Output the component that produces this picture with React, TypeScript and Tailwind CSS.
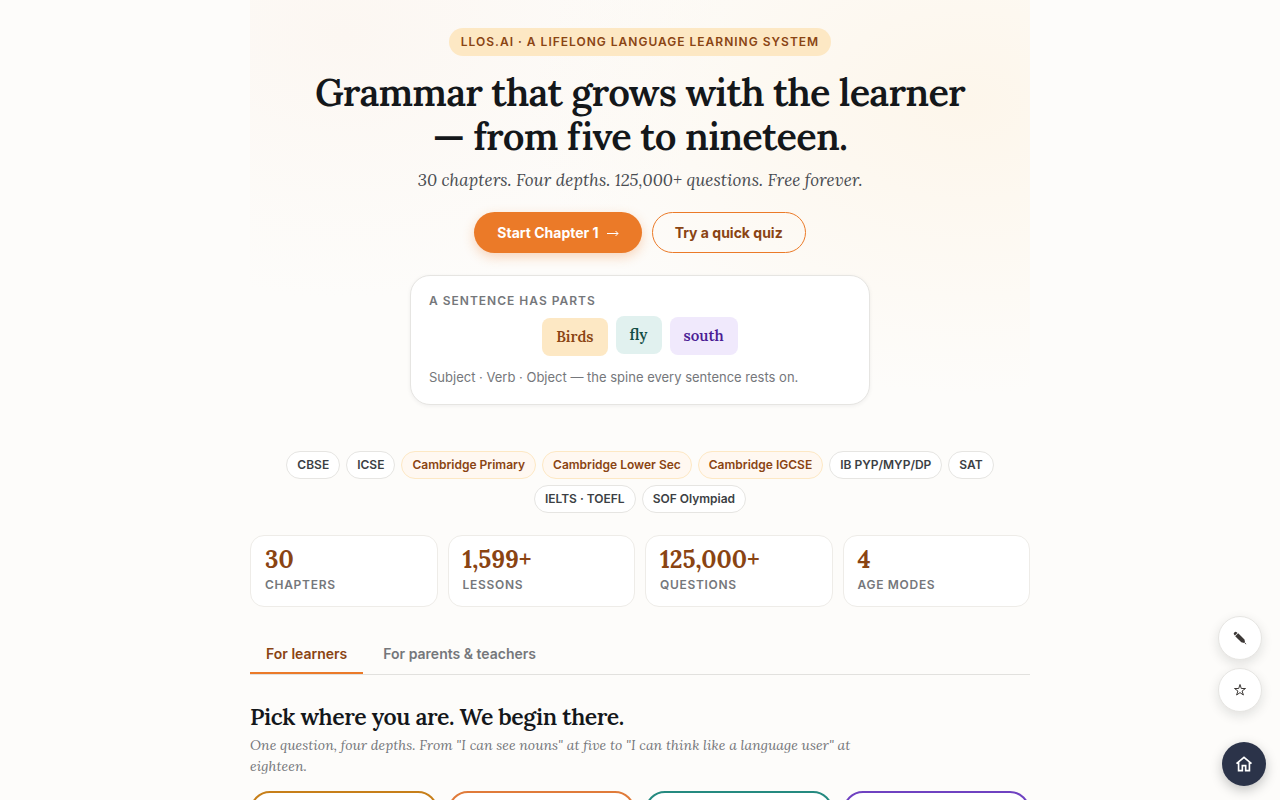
const boards = [
  { name: "CBSE" },
  { name: "ICSE" },
  { name: "Cambridge Primary", highlight: true },
  { name: "Cambridge Lower Sec", highlight: true },
  { name: "Cambridge IGCSE", highlight: true },
  { name: "IB PYP/MYP/DP" },
  { name: "SAT" },
  { name: "IELTS · TOEFL" },
  { name: "SOF Olympiad" },
];

const stats = [
  { value: "30", label: "Chapters" },
  { value: "1,599+", label: "Lessons" },
  { value: "125,000+", label: "Questions" },
  { value: "4", label: "Age modes" },
];

const depths = ["border-[#c77f1a]", "border-[#e07b3a]", "border-[#258a80]", "border-[#6f42c1]"];

function Hero() {
  return (
    <section className="flex flex-col items-center px-6 pt-7 pb-8 text-center bg-[radial-gradient(ellipse_56%_66%_at_92%_24%,#fdf6eb_0%,transparent_100%),radial-gradient(ellipse_50%_60%_at_12%_8%,#fcf7f2_0%,transparent_100%)]">
      <span className="rounded-full bg-[#fde8c4] px-3 py-1 text-xs leading-5 font-semibold tracking-[1px] uppercase text-[#8a4413]">
        LLOS.ai · A lifelong language learning system
      </span>
      <h1 className="mt-3.5 max-w-[680px] font-[Lora,'Liberation_Serif',serif] text-[38px] leading-[44px] font-semibold tracking-[-0.02em] text-[#14171a]">
        Grammar that grows with the learner — from five to nineteen.
      </h1>
      <p className="mt-[9px] font-[Lora,'Liberation_Serif',serif] text-[17px] leading-[26px] italic text-[#4a4d52]">
        30 chapters. Four depths. 125,000+ questions. Free forever.
      </p>
      <div className="mt-[19px] flex flex-wrap justify-center gap-[10px]">
        <button className="flex h-[41px] items-center gap-1.5 rounded-full bg-[#eb7a28] px-[23px] text-sm font-bold text-white shadow-[0_4px_12px_rgba(235,122,40,0.3)]">
          Start Chapter 1
          <svg viewBox="0 0 14 14" className="size-3.5" fill="none" stroke="currentColor" strokeWidth="1">
            <path d="M2 7.500h11M10.500 5l2.500 2.500-2.500 2.500" />
          </svg>
        </button>
        <button className="h-[41px] rounded-full border border-[#eb7a28] px-[22px] text-sm font-bold text-[#8a4413]">
          Try a quick quiz
        </button>
      </div>
      <div className="mt-[22px] w-full max-w-[460px] rounded-[20px] border border-[#e6e5e2] bg-white px-[18px] pt-4 pb-[17px] text-left shadow-[0_1px_4px_rgba(20,23,26,0.06)]">
        <div className="text-xs leading-[18px] font-semibold tracking-[1px] uppercase text-[#75777b]">A sentence has parts</div>
        <div className="mt-1.5 flex justify-center gap-2 font-[Lora,'Liberation_Serif',serif] text-[15px] leading-[22px] font-semibold">
          <span className="mt-0.5 rounded-lg bg-[#fde8c4] px-3.5 py-2 text-[#8a4413]">Birds</span>
          <span className="mb-0.5 rounded-lg bg-[#e1f1ef] px-3.5 py-2 text-[#134e45]">fly</span>
          <span className="mt-px mb-px rounded-lg bg-[#f0e9fc] px-3.5 py-2 text-[#4c1d95]">south</span>
        </div>
        <p className="mt-[11px] text-[13px] leading-5 text-[#75777b]">Subject · Verb · Object — the spine every sentence rests on.</p>
      </div>
    </section>
  );
}

export default function App() {
  return (
    <div className="min-h-screen bg-[#fdfcfa] font-[Inter,sans-serif] text-[#14171a]">
      <main className="mx-auto max-w-[780px] pb-16">
        <Hero />

        <ul className="mt-3.5 flex flex-wrap justify-center gap-1.5 px-6">
          {boards.map((b) => (
            <li
              key={b.name}
              className={
                b.highlight
                  ? "rounded-full border border-[#fde8c4] bg-[#fff8f1] px-[10px] py-1 text-xs leading-[18px] font-semibold text-[#8a4413]"
                  : "rounded-full border border-[#e6e5e2] bg-white px-[10px] py-1 text-xs leading-[18px] font-semibold text-[#3c3f44]"
              }
            >
              {b.name}
            </li>
          ))}
        </ul>

        <dl className="mt-[22px] grid grid-cols-4 gap-[10px]">
          {stats.map((s) => (
            <div key={s.label} className="flex flex-col-reverse rounded-[14px] border border-[#eeece8] bg-white px-3.5 pt-[11px] pb-[11px]">
              <dt className="mt-0.5 text-xs leading-5 font-semibold tracking-[0.7px] uppercase text-[#75777b]">{s.label}</dt>
              <dd className="font-[Lora,'Liberation_Serif',serif] text-2xl leading-[26px] font-bold text-[#8a4413]">{s.value}</dd>
            </div>
          ))}
        </dl>

        <div role="tablist" className="mt-7 flex border-b border-[#e2e1de]">
          <button role="tab" aria-selected="true" className="border-b-2 border-[#eb7a28] px-4 pt-2 pb-[7px] text-sm leading-[22px] font-semibold text-[#8a4413]">
            For learners
          </button>
          <button role="tab" aria-selected="false" className="border-b-2 border-transparent px-5 pt-2 pb-[7px] text-sm leading-[22px] font-semibold text-[#75777b]">
            For parents &amp; teachers
          </button>
        </div>

        <section className="mt-7">
          <h2 className="font-[Lora,'Liberation_Serif',serif] text-[23px] leading-7 font-semibold tracking-[-0.02em]">Pick where you are. We begin there.</h2>
          <p className="mt-1 max-w-[620px] font-[Lora,'Liberation_Serif',serif] text-sm leading-[21px] italic text-[#75777b]">
            One question, four depths. From "I can see nouns" at five to "I can think like a language user" at eighteen.
          </p>
          <div className="mt-3.5 grid grid-cols-4 gap-[10px]">
            {depths.map((d) => (
              <div key={d} className={`h-44 rounded-[20px] border-2 bg-white ${d}`} />
            ))}
          </div>
        </section>
      </main>

      <div className="fixed right-[18px] bottom-[88px] flex flex-col gap-2">
        <button aria-label="Notes" className="flex size-11 items-center justify-center rounded-full border border-[#e6e5e2] bg-white text-[#3c3836] shadow-[0_4px_12px_rgba(20,23,26,0.12)]">
          <svg viewBox="0 0 14 14" className="size-3.5" fill="currentColor">
            <path d="M1 3.600Q.2 2.600 1.300 1.500T3.700 1.200L4.500 2 1.900 4.500zM2.200 5.200 5.200 2.200l6.300 6.200L12 11.200l-.8.8-2.900-.7zM12.500 11.800l.9 1.800-1.700-1z" />
          </svg>
        </button>
        <button aria-label="Favourites" className="flex size-11 items-center justify-center rounded-full border border-[#e6e5e2] bg-white text-[#3c3836] shadow-[0_4px_12px_rgba(20,23,26,0.12)]">
          <svg viewBox="0 0 14 14" className="size-3.5" fill="none" stroke="currentColor" strokeWidth="1">
            <path d="M7 1.500 8.300 5.500h4.200L9.100 8l1.300 4L7 9.600 3.600 12l1.300-4L1.500 5.500h4.200z" />
          </svg>
        </button>
      </div>
      <a href="#" aria-label="Home" className="fixed right-3.5 bottom-3.5 flex size-11 items-center justify-center rounded-full bg-[#2b3349] text-white shadow-[0_4px_12px_rgba(20,23,26,0.25)]">
        <svg viewBox="0 0 24 24" className="size-5" fill="none" stroke="currentColor" strokeWidth="2">
          <path d="M3 11.500 12 4l9 7.500M5.500 9.500V20h4.500v-6h4v6h4.500V9.500" />
        </svg>
      </a>
    </div>
  );
}
